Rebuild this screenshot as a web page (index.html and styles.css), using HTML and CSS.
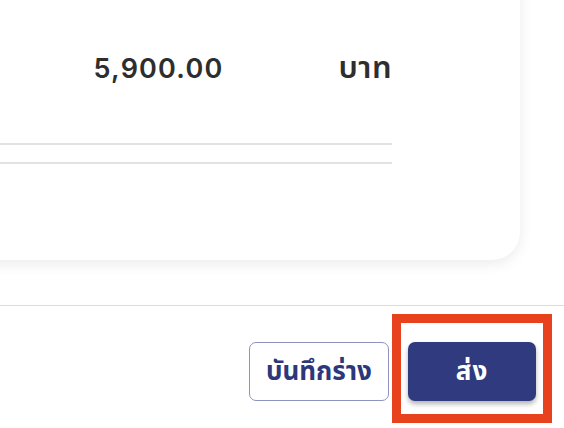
FILE: index.html
```html
<!DOCTYPE html>
<html lang="th">
<head>
<meta charset="utf-8">
<link rel="stylesheet" href="styles.css">
</head>
<body>
<div class="page">
  <main class="content">
    <section class="card">
      <div class="total-row">
        <span class="amount">5,900.00</span>
        <span class="unit">บาท</span>
      </div>
      <hr class="rule rule-first">
      <hr class="rule rule-second">
    </section>
  </main>
  <footer class="footer">
    <button class="btn btn-draft" type="button">บันทึกร่าง</button>
    <button class="btn btn-send" type="button">ส่ง<span class="highlight"></span></button>
  </footer>
</div>
</body>
</html>
```

FILE: styles.css
```css
html, body {
  margin: 0;
  padding: 0;
  background: #ffffff;
}

body {
  width: 564px;
  height: 428px;
  overflow: hidden;
  font-family: "Noto Sans Thai", "Noto Sans", "Open Sans", sans-serif;
}

.page {
  display: flex;
  flex-direction: column;
  height: 428px;
}

.content {
  height: 306px;
  overflow: hidden;
  border-bottom: 1px solid #dcdcdc;
  box-sizing: border-box;
}

.card {
  margin: -40px 44px 0 -60px;
  height: 300px;
  background: #ffffff;
  border-radius: 28px;
  box-shadow: 0 4px 14px rgba(0, 0, 0, 0.08);
  padding: 0 128px 0 0;
  box-sizing: border-box;
  display: flex;
  flex-direction: column;
}

.total-row {
  display: flex;
  justify-content: flex-end;
  align-items: baseline;
  margin-top: 92px;
  color: #2e2e2e;
  line-height: 34px;
}

.amount {
  font-family: "Inter", "Noto Sans", sans-serif;
  font-size: 27px;
  font-weight: 600;
  letter-spacing: 1.2px;
  margin-right: 115px;
}

.unit {
  min-width: 52px;
  text-align: right;
  font-size: 31px;
  font-weight: 600;
  letter-spacing: 0.5px;
}

.rule {
  border: none;
  height: 2px;
  background: #e2e2e2;
  margin: 0;
}

.rule-first {
  margin-top: 57px;
}

.rule-second {
  margin-top: 17px;
}

.footer {
  flex: 1;
  display: flex;
  justify-content: flex-end;
  align-items: flex-start;
  gap: 19px;
  padding: 36px 28px 0 0;
}

.btn {
  height: 59px;
  border-radius: 7px;
  font-family: "Noto Sans Thai", "Noto Sans", sans-serif;
  font-size: 26px;
  font-weight: 700;
  cursor: pointer;
  padding: 0;
}

.btn-draft {
  width: 140px;
  background: #ffffff;
  color: #2d377a;
  border: 1.5px solid #8e93c0;
}

.btn-send {
  width: 128px;
  position: relative;
  background: #2f3a7f;
  color: #ffffff;
  border: none;
  box-shadow: 0 3px 5px rgba(0, 0, 0, 0.3);
  letter-spacing: 1px;
}

.highlight {
  position: absolute;
  left: -16px;
  right: -16px;
  top: -28px;
  bottom: -22px;
  border: 9px solid #e8411d;
  pointer-events: none;
}
```
